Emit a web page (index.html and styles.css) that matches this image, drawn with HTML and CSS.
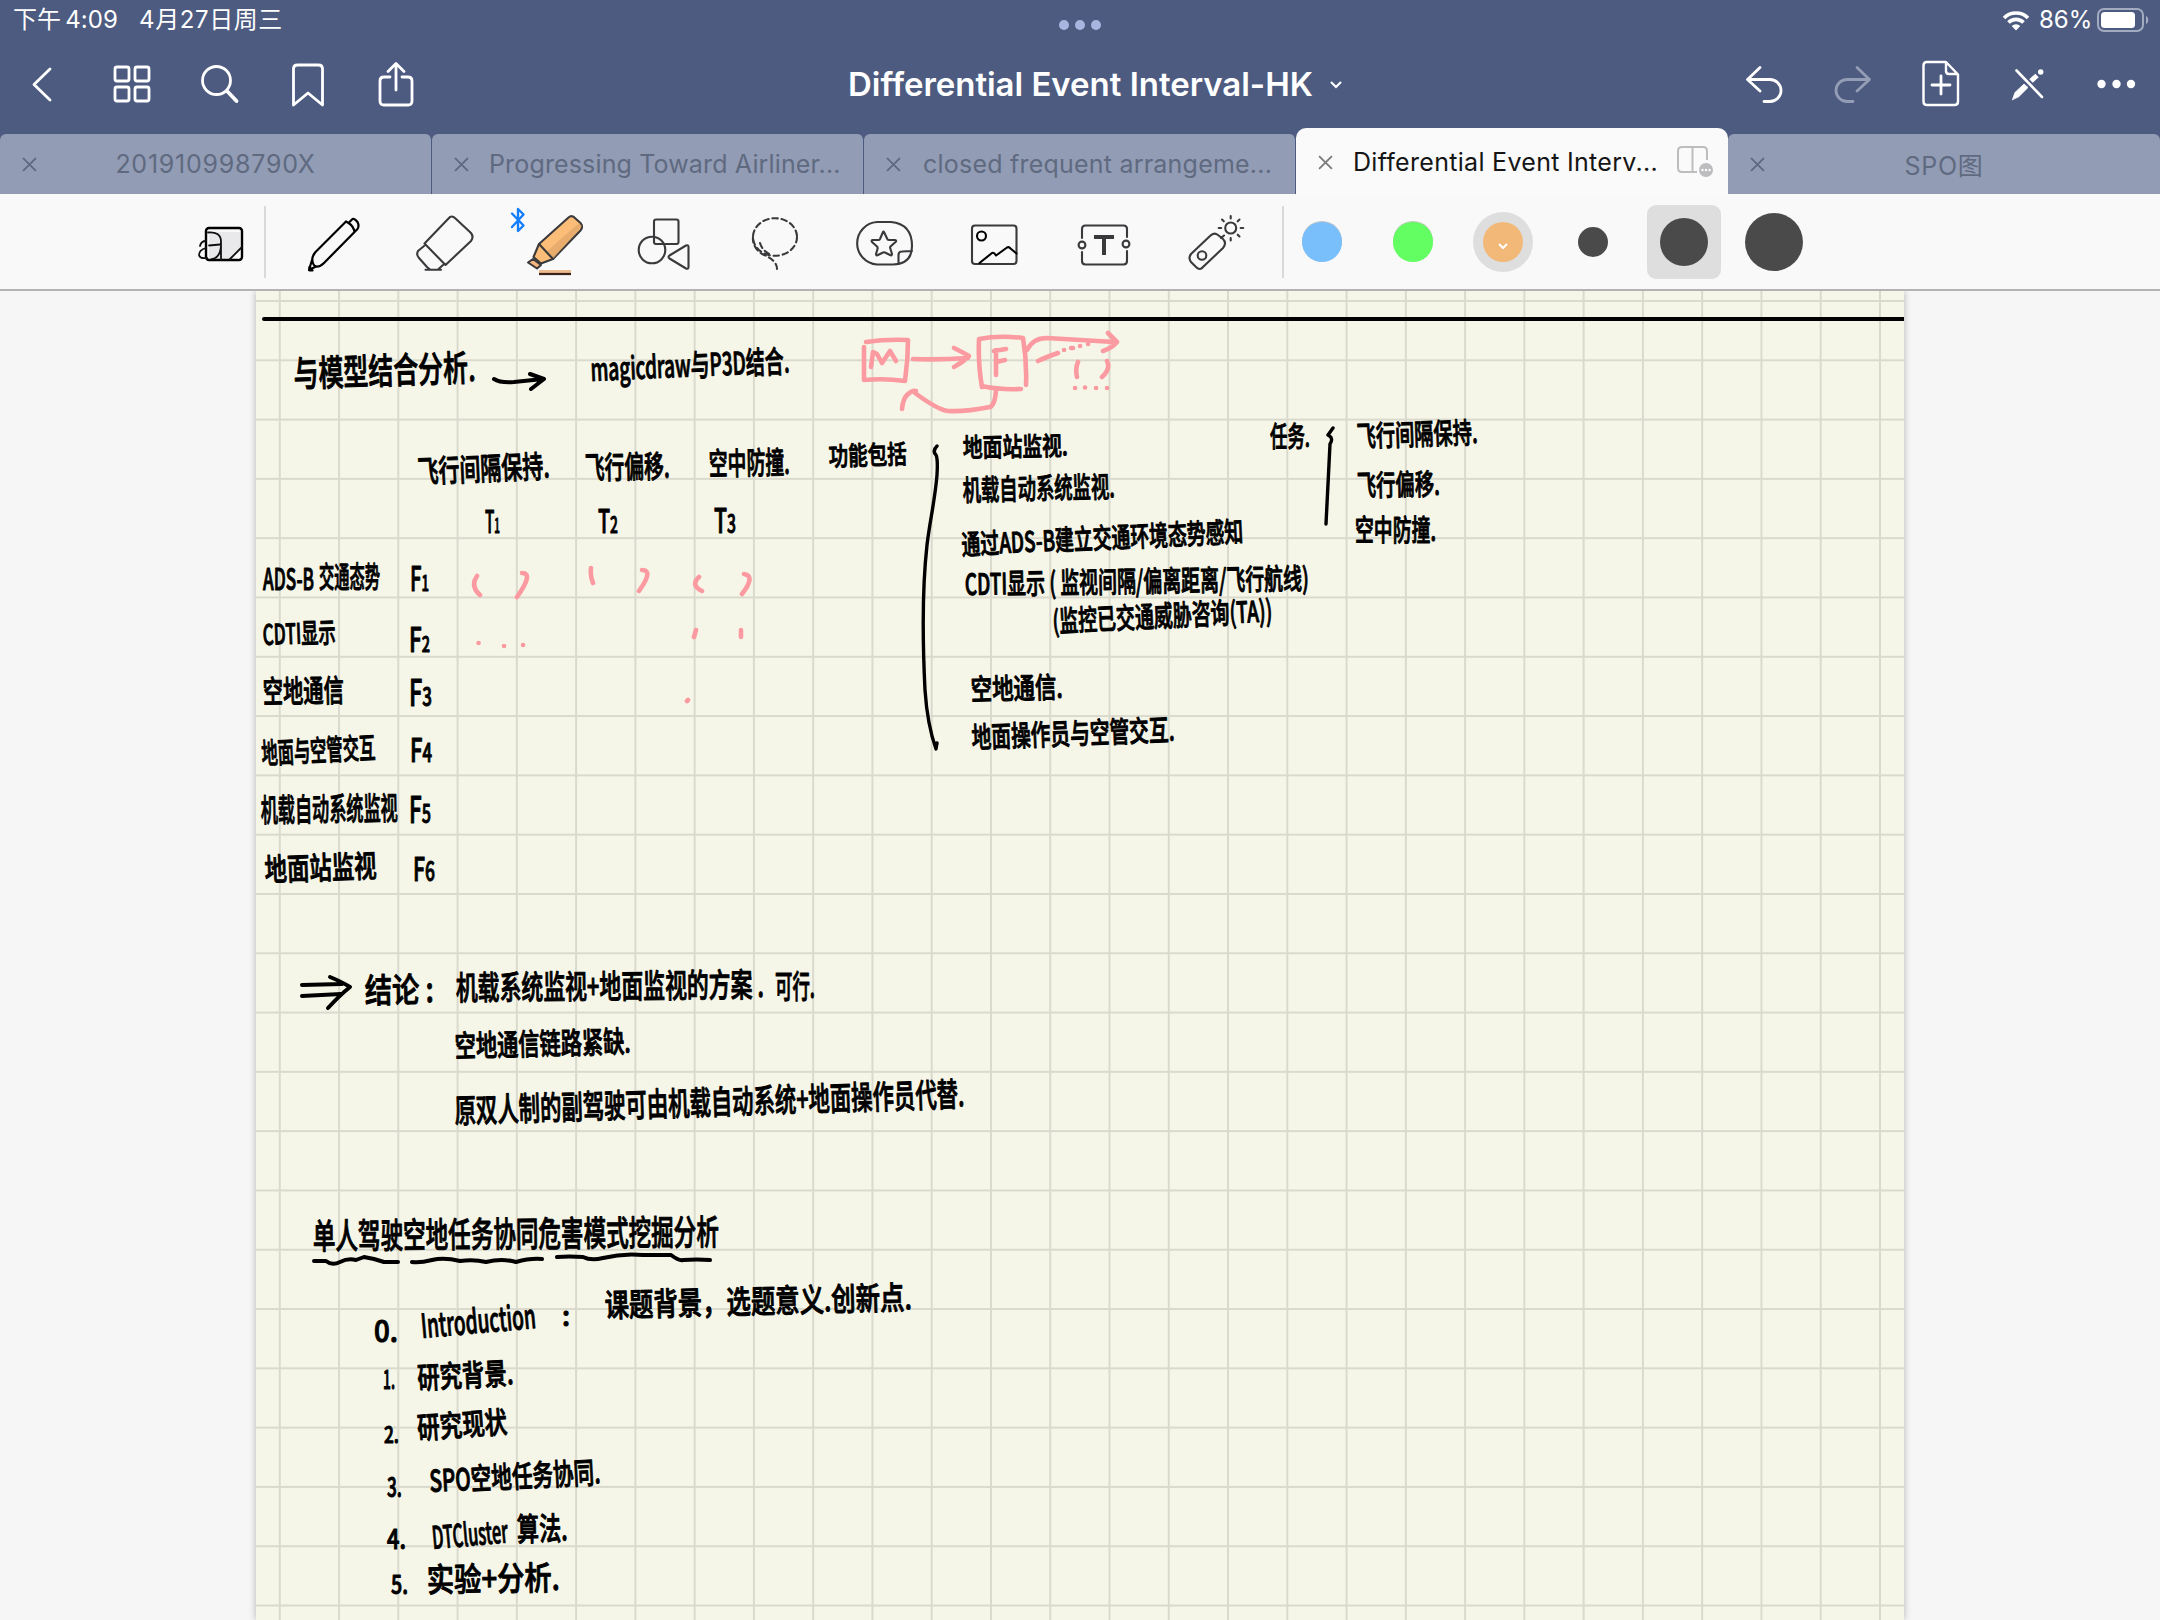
FILE: index.html
```html
<!DOCTYPE html>
<html lang="zh-CN">
<head>
<meta charset="utf-8">
<title>Differential Event Interval-HK</title>
<link rel="stylesheet" href="styles.css">
</head>
<body>
<header class="header">
  <div class="status">
    <div class="status-left"><span class="status-time">下午<b></b>4:09</span><span class="status-date">4月27日周三</span></div>
    <div class="status-dots"><i></i><i></i><i></i></div>
    <div class="status-right">
      <svg class="wifi" viewBox="0 0 28 21"><path d="M2 8a17 17 0 0 1 24 0M6.5 12.5a10.5 10.5 0 0 1 15 0" fill="none" stroke="#fff" stroke-width="3.6"/><path d="M14 20.5l-4.3-4.4a6 6 0 0 1 8.6 0z" fill="#fff"/></svg>
      <span class="status-battery">86%</span>
      <svg class="battery" viewBox="0 0 54 24"><rect x="1" y="1" width="45" height="22" rx="6" fill="none" stroke="#a3abc0" stroke-width="2"/><rect x="4" y="4" width="34" height="16" rx="3.5" fill="#fff"/><path d="M49 8c3 1 3 7 0 8z" fill="#a3abc0"/></svg>
    </div>
  </div>
  <nav class="nav">
    <div class="nav-group">
      <svg class="nav-icon" viewBox="0 44 88 80"><path d="M50 69L34 84.5L50 100"/></svg>
      <svg class="nav-icon" viewBox="88 44 88 80"><rect x="115" y="67" width="14" height="14" rx="2"/><rect x="135" y="67" width="14" height="14" rx="2"/><rect x="115" y="87" width="14" height="14" rx="2"/><rect x="135" y="87" width="14" height="14" rx="2"/></svg>
      <svg class="nav-icon" viewBox="176 44 88 80"><circle cx="216.500" cy="80.500" r="14"/><path d="M227 91L236.500 101" stroke-width="3.800"/></svg>
      <svg class="nav-icon" viewBox="264 44 88 80"><path d="M293.500 105V69q0-4 4-4h21q4 0 4 4v36L308 93z"/></svg>
      <svg class="nav-icon" viewBox="352 44 88 80"><path d="M390 77h-6q-4 0-4 4v20q0 4 4 4h24q4 0 4-4V81q0-4-4-4h-6M396 90V64M388 71.500L396 63.500L404 71.500"/></svg>
    </div>
    <div class="title"><h1>Differential Event Interval-HK</h1><svg class="title-chevron" viewBox="0 0 14 9"><path d="M2 2L7 7L12 2" fill="none" stroke="#fff" stroke-width="2.200"/></svg></div>
    <div class="nav-group">
      <svg class="nav-icon" viewBox="1720 44 88 80"><path d="M1760 67.500L1747.500 79.500L1760 91M1748 79.500H1770a11 11 0 0 1 0 22H1764"/></svg>
      <svg class="nav-icon nav-icon-off" viewBox="1808 44 88 80"><path d="M1857 67.500L1869.500 79.500L1857 91M1869 79.500H1847a11 11 0 0 0 0 22H1853"/></svg>
      <svg class="nav-icon" viewBox="1896 44 88 80"><path d="M1927 62h19l12 12.500v27q0 3.500-3.500 3.500h-27.500q-3.500 0-3.500-3.500V65.500q0-3.500 3.500-3.500zM1946 62.500V71q0 3 3 3h8.500" stroke-width="2.400"/><path d="M1941 76v18M1932 85h18"/></svg>
      <svg class="nav-icon" viewBox="1984 44 88 80"><path d="M2016.500 70.500L2042 97" stroke-width="2.600"/><path d="M2012.500 99.500L2015 92.500L2024 84L2028 87.500L2019 96.500z" fill="#fff" stroke-width="0.800"/><path d="M2031 81L2037 75.500" stroke-width="5" stroke-linecap="butt"/><circle cx="2040.700" cy="72" r="2" fill="#fff" stroke-width="1.500"/></svg>
      <svg class="nav-icon" viewBox="2072 44 88 80"><g fill="#fff" stroke="none"><circle cx="2101.500" cy="84" r="4.200"/><circle cx="2116.500" cy="84" r="4.200"/><circle cx="2131" cy="84" r="4.200"/></g></svg>
    </div>
  </nav>
  <div class="tabs">
    <div class="tab tab-centered"><svg class="close" viewBox="0 0 14 14"><path d="M1 1L13 13M13 1L1 13"/></svg><span class="tab-name">201910998790X</span></div>
    <div class="tab"><svg class="close" viewBox="0 0 14 14"><path d="M1 1L13 13M13 1L1 13"/></svg><span class="tab-name">Progressing Toward Airliner...</span></div>
    <div class="tab"><svg class="close" viewBox="0 0 14 14"><path d="M1 1L13 13M13 1L1 13"/></svg><span class="tab-name">closed frequent arrangeme...</span></div>
    <div class="tab tab-active"><svg class="close" viewBox="0 0 14 14"><path d="M1 1L13 13M13 1L1 13"/></svg><span class="tab-name">Differential Event Interv...</span>
      <svg class="split" viewBox="0 0 37 32"><path d="M20 26H5q-4 0-4-4V5q0-4 4-4h21q4 0 4 4v9M15.500 1v25" fill="none" stroke="#bdbdc0" stroke-width="2"/><circle cx="29" cy="24" r="7" fill="#bdbdc0"/><g fill="#fff"><circle cx="25.500" cy="24" r="1.200"/><circle cx="29" cy="24" r="1.200"/><circle cx="32.500" cy="24" r="1.200"/></g></svg></div>
    <div class="tab tab-centered"><svg class="close" viewBox="0 0 14 14"><path d="M1 1L13 13M13 1L1 13"/></svg><span class="tab-name">SPO图</span></div>
  </div>
</header>

<div class="toolbar">
  <svg class="tool tool-first" viewBox="166 194 98 96"><rect x="209" y="232" width="31" height="27" fill="#e9e9eb" stroke="none"/><path d="M230 260L242 247V260z" fill="#fff" stroke="none"/><rect x="206" y="228" width="36" height="32" rx="3" stroke="#000" stroke-width="2.400"/><g stroke="#111" stroke-width="1.800"><path d="M208 232.500q13-1 13 9V260M209 245.500L220 244.500M230 259L241.500 247.500M206 241q-5 0-6 5M206 248q-7 2-7 7q1 4 8 3M221 246q-1 12-9 13"/></g></svg>
  <i class="divider"></i>
  <svg class="tool tool-black" viewBox="278 194 110 96"><path d="M312.500 261q-1-4 3-9L346 221.500l2.500 1.500l4-4q2-1 5 3q2 4 0 7L324 263q-4 4-8 3.500q-3-1-3.500-5.500zM348.500 223q5 3 6 9M346 221.500L334 233.500M312 260L309 270L316 266.500"/><path d="M309.500 267v3.500h3z" fill="#000"/></svg>
  <svg class="tool" viewBox="388 194 110 96"><path d="M448.500 218.500q3-4 7 0L471 233q3 4 0 8L445.500 265L424.500 243.500zM424 246l-6 5q-2 4 1 7l8 9l3 2.500M443 265l-5 4.500M425.500 269.700H441"/></svg>
  <svg class="tool" viewBox="498 194 110 96"><path d="M512 213.500L523.500 225.500L518 231V209L523.500 214.500L512 227" stroke="#147efb" stroke-width="2.400"/><path d="M539 244L568.500 217.500q3.500-3 7 1l5 4.500q3 4 0 7.500L553 259L541 263.500L533.500 257z" fill="#fbbd78"/><path d="M546 252l33-29l3 3L553 259z" fill="#dda466" stroke="none" opacity=".65"/><path d="M539 244L553 259"/><path d="M533 259L528 262.500L537 268.500L541 265z" fill="#f7b57f"/><path d="M539 271.500H571" stroke="#efbb91" stroke-width="3" stroke-linecap="butt"/><path d="M539 274H571" stroke="#3b2418" stroke-width="2.200" stroke-linecap="butt"/></svg>
  <svg class="tool" viewBox="608 194 110 96"><rect x="654" y="219.500" width="24.500" height="24.500" rx="2"/><circle cx="652" cy="250" r="13.300"/><path d="M669.500 255.500L686 245.500q2.500-1 2.500 1.500V267q0 2.500-2.500 1.500L669.500 258.500q-2-1.500 0-3z"/></svg>
  <svg class="tool" viewBox="718 194 110 96"><ellipse cx="775" cy="237" rx="22" ry="18.800" stroke-dasharray="5.500 3.800"/><path d="M753 237q-1 10 9 17q15 6 15 15M760 243q2 7 9 11" stroke-dasharray="5.500 3.800"/></svg>
  <svg class="tool" viewBox="828 194 110 96"><path d="M877 222h14q21 2 21 24q0 18-19 18.500h-16a21.300 21.300 0 0 1 0-42.500zM898.500 264V255q0-3.500 3.500-3.500l10-.5"/><path d="M884 232l3.300 7q.5 1 2 1h5.700q2 .5.500 2l-5 4.500q-.8 1 0 2.500l1.500 5q0 2-2 1l-5-2.500q-1-.6-2 0l-5 2.500q-2 1-2-1l1.500-5q.5-1.500-.5-2.500l-5-4.500q-1-1.500.5-2h6q1 0 1.500-1l3-7q.5-1 1 0z"/></svg>
  <svg class="tool" viewBox="938 194 110 96"><rect x="972" y="225.500" width="44.500" height="38.500" rx="3"/><g stroke="#000"><circle cx="981.500" cy="236" r="4.500"/><path d="M979.500 263L992 253q2-1 4 2.500l11-8q2-1 3.500 1l6 5"/></g></svg>
  <svg class="tool" viewBox="1048 194 110 96"><path d="M1082 238V229q0-3.500 3.500-3.500h38q3.500 0 3.500 3.500v8M1082 252v9q0 3.500 3.500 3.500h38q3.500 0 3.500-3.500V251"/><circle cx="1082" cy="245" r="3.400"/><circle cx="1126" cy="244" r="3.400"/><path d="M1094 237H1114M1104 237V255" stroke-width="4" stroke-linecap="butt"/></svg>
  <svg class="tool" viewBox="1158 194 110 96"><path d="M1210 236q4-4 8-1l5 4q4 4 0 9L1203 267q-3 4-7 0l-5-5q-3-4 0-8zM1221 238l3-2.500"/><circle cx="1202" cy="255.500" r="4.300"/><circle cx="1230.700" cy="228" r="5.500"/><path d="M1230.700 216v2.500M1230.700 238v2.500M1218.700 228h2.500M1240.700 228h2.500M1222 219.500l1.800 1.800M1239.500 219.500l-1.800 1.800M1239.500 236.500l-1.800-1.800"/></svg>
  <i class="divider divider-end"></i>
  <div class="swatches">
    <div class="swatch"><i class="dot blue"></i></div>
    <div class="swatch"><i class="dot green"></i></div>
    <div class="swatch"><i class="ring"><svg class="dot orange" viewBox="0 0 40 40"><path d="M16 22L20 26L24 22" fill="none" stroke="#fff" stroke-width="2"/></svg></i></div>
    <div class="swatch"><i class="dot small"></i></div>
    <div class="swatch"><i class="picked"><i class="dot medium"></i></i></div>
    <div class="swatch"><i class="dot large"></i></div>
  </div>
</div>

<main class="workspace">
<article class="page">
<svg class="ink" viewBox="256 291 1648 1329">
  <path class="rule" d="M264 319H1904"/>

  <!-- heading line -->
  <text transform="translate(294 387) rotate(-2)" font-size="36" textLength="182" lengthAdjust="spacingAndGlyphs">与模型结合分析.</text>
  <text transform="translate(591 381) rotate(-2.500)" font-size="31" textLength="199" lengthAdjust="spacingAndGlyphs">magicdraw与P3D结合.</text>
  <path class="pen" d="M494 379q6 4 20 3l29-3M530 374L544 379L531 389"/>

  <!-- task columns -->
  <text transform="translate(418 483) rotate(-2.500)" font-size="31" textLength="132" lengthAdjust="spacingAndGlyphs">飞行间隔保持.</text>
  <text transform="translate(585 479) rotate(-1)" font-size="31" textLength="85" lengthAdjust="spacingAndGlyphs">飞行偏移.</text>
  <text transform="translate(709 475) rotate(-1)" font-size="31" textLength="81" lengthAdjust="spacingAndGlyphs">空中防撞.</text>
  <text transform="translate(829 466) rotate(-2)" font-size="26" textLength="78" lengthAdjust="spacingAndGlyphs">功能包括</text>
  <text x="485" y="533" font-size="31" textLength="15" lengthAdjust="spacingAndGlyphs">T<tspan font-size="20">1</tspan></text>
  <text x="598" y="533" font-size="33" textLength="20" lengthAdjust="spacingAndGlyphs">T<tspan font-size="23">2</tspan></text>
  <text x="714" y="533" font-size="34" textLength="22" lengthAdjust="spacingAndGlyphs">T<tspan font-size="25">3</tspan></text>

  <!-- function rows -->
  <text x="263" y="590" font-size="29" textLength="51" lengthAdjust="spacingAndGlyphs">ADS-B</text>
  <text x="319" y="588" font-size="29" textLength="61" lengthAdjust="spacingAndGlyphs">交通态势</text>
  <text x="410" y="591" font-size="34" textLength="19" lengthAdjust="spacingAndGlyphs">F<tspan font-size="22">1</tspan></text>
  <text transform="translate(263 645) rotate(-2)" font-size="28" textLength="73" lengthAdjust="spacingAndGlyphs">CDTI显示</text>
  <text x="409" y="652" font-size="34" textLength="21" lengthAdjust="spacingAndGlyphs">F<tspan font-size="22">2</tspan></text>
  <text transform="translate(263 703) rotate(-1)" font-size="31" textLength="81" lengthAdjust="spacingAndGlyphs">空地通信</text>
  <text x="409" y="706" font-size="36" textLength="23" lengthAdjust="spacingAndGlyphs">F<tspan font-size="26">3</tspan></text>
  <text transform="translate(262 764) rotate(-3)" font-size="29" textLength="114" lengthAdjust="spacingAndGlyphs">地面与空管交互</text>
  <text x="410" y="762" font-size="33" textLength="22" lengthAdjust="spacingAndGlyphs">F<tspan font-size="25">4</tspan></text>
  <text transform="translate(261 822) rotate(-1)" font-size="32" textLength="137" lengthAdjust="spacingAndGlyphs">机载自动系统监视</text>
  <text x="409" y="823" font-size="36" textLength="22" lengthAdjust="spacingAndGlyphs">F<tspan font-size="26">5</tspan></text>
  <text transform="translate(265 881) rotate(-2)" font-size="31" textLength="112" lengthAdjust="spacingAndGlyphs">地面站监视</text>
  <text x="413" y="881" font-size="33" textLength="22" lengthAdjust="spacingAndGlyphs">F<tspan font-size="27">6</tspan></text>

  <!-- function list -->
  <path class="pen thin" d="M937 446q-5 5-1 9q2 4 1 20C935 500 930 520 927 545C922 590 923 650 925 690C927 720 931 735 936 749L937 743"/>
  <text transform="translate(963 457) rotate(-1)" font-size="26" textLength="105" lengthAdjust="spacingAndGlyphs">地面站监视.</text>
  <text transform="translate(963 501) rotate(-1.500)" font-size="29" textLength="152" lengthAdjust="spacingAndGlyphs">机载自动系统监视.</text>
  <text transform="translate(962 555) rotate(-2.700)" font-size="28" textLength="282" lengthAdjust="spacingAndGlyphs">通过ADS-B建立交通环境态势感知</text>
  <text transform="translate(965 595) rotate(-1)" font-size="29" textLength="344" lengthAdjust="spacingAndGlyphs">CDTI显示 ( 监视间隔/偏离距离/飞行航线)</text>
  <text transform="translate(1053 632) rotate(-2.800)" font-size="29" textLength="220" lengthAdjust="spacingAndGlyphs">(监控已交通威胁咨询(TA))</text>
  <text transform="translate(971 700) rotate(-1.500)" font-size="29" textLength="92" lengthAdjust="spacingAndGlyphs">空地通信.</text>
  <text transform="translate(972 748) rotate(-2.200)" font-size="29" textLength="203" lengthAdjust="spacingAndGlyphs">地面操作员与空管交互.</text>

  <!-- task list -->
  <text transform="translate(1270 447)" font-size="28" textLength="40" lengthAdjust="spacingAndGlyphs">任务.</text>
  <path class="pen thin" d="M1333 428l-5 7q6 3 2 9q-2 40-4 80"/>
  <text transform="translate(1357 447) rotate(-2)" font-size="29" textLength="121" lengthAdjust="spacingAndGlyphs">飞行间隔保持.</text>
  <text transform="translate(1357 496) rotate(-1)" font-size="29" textLength="83" lengthAdjust="spacingAndGlyphs">飞行偏移.</text>
  <text transform="translate(1355 541)" font-size="29" textLength="81" lengthAdjust="spacingAndGlyphs">空中防撞.</text>

  <!-- conclusion -->
  <path class="pen" d="M302 985L342 984M302 996L341 994M330 977Q342 982 350 987Q340 995 328 1008"/>
  <text transform="translate(365 1003) rotate(-1)" font-size="34" textLength="69" lengthAdjust="spacingAndGlyphs">结论 :</text>
  <text transform="translate(456 1000) rotate(-.6)" font-size="33" textLength="308" lengthAdjust="spacingAndGlyphs">机载系统监视+地面监视的方案 .</text>
  <text x="775" y="998" font-size="32" textLength="40" lengthAdjust="spacingAndGlyphs">可行.</text>
  <text transform="translate(455 1057) rotate(-1.500)" font-size="30" textLength="176" lengthAdjust="spacingAndGlyphs">空地通信链路紧缺.</text>
  <text transform="translate(455 1123) rotate(-1.900)" font-size="33" textLength="510" lengthAdjust="spacingAndGlyphs">原双人制的副驾驶可由机载自动系统+地面操作员代替.</text>

  <!-- outline -->
  <text transform="translate(313 1249) rotate(-.6)" font-size="35" textLength="406" lengthAdjust="spacingAndGlyphs">单人驾驶空地任务协同危害模式挖掘分析</text>
  <path class="pen" d="M314 1261h12q6 5 14 1t16-2l8-3l10 2l10 3l14 0M412 1262q8 1 20-2t28 1q14-2 26 1q16-4 30 0q14-4 26-3M557 1257q12-1 26 0q8 4 20 1q20-5 40-3h28q8 6 12 5q14-1 27 0"/>
  <text x="374" y="1342" font-size="29" textLength="24" lengthAdjust="spacingAndGlyphs">0.</text>
  <text transform="translate(422 1338) rotate(-5)" font-size="33" textLength="115" lengthAdjust="spacingAndGlyphs">Introduction</text>
  <text x="562" y="1326" font-size="27">:</text>
  <text transform="translate(605 1317) rotate(-1.500)" font-size="32" textLength="307" lengthAdjust="spacingAndGlyphs">课题背景，选题意义.创新点.</text>
  <text x="383" y="1389" font-size="26" textLength="12" lengthAdjust="spacingAndGlyphs">1.</text>
  <text transform="translate(418 1389) rotate(-3)" font-size="30" textLength="96" lengthAdjust="spacingAndGlyphs">研究背景.</text>
  <text x="384" y="1443" font-size="23" textLength="15" lengthAdjust="spacingAndGlyphs">2.</text>
  <text transform="translate(418 1439) rotate(-4)" font-size="30" textLength="90" lengthAdjust="spacingAndGlyphs">研究现状</text>
  <text x="387" y="1497" font-size="27" textLength="15" lengthAdjust="spacingAndGlyphs">3.</text>
  <text transform="translate(430 1492) rotate(-3)" font-size="30" textLength="171" lengthAdjust="spacingAndGlyphs">SPO空地任务协同.</text>
  <text x="387" y="1549" font-size="27" textLength="19" lengthAdjust="spacingAndGlyphs">4.</text>
  <text transform="translate(433 1549) rotate(-5)" font-size="31" textLength="76" lengthAdjust="spacingAndGlyphs">DTCluster</text>
  <text transform="translate(517 1541) rotate(-1)" font-size="32" textLength="51" lengthAdjust="spacingAndGlyphs">算法.</text>
  <text x="391" y="1594" font-size="26" textLength="17" lengthAdjust="spacingAndGlyphs">5.</text>
  <text transform="translate(427 1592) rotate(-1)" font-size="33" textLength="133" lengthAdjust="spacingAndGlyphs">实验+分析.</text>

  <!-- pink diagram and marks -->
  <g class="pink">
    <path d="M866 342q20-3 42-2q0 20-3 41q-20-3-41-1V347M913 359q25 1 55-1M954 348q10 5 15 8q-7 7-15 11"/>
    <path d="M871 367L873 352L877 354L882 363L890 351L896 361" stroke-width="3.600"/>
    <path d="M982 387q-4-22-3-48q20-4 44-1q4 24 3 47M982 386q18 4 39 3M996 350V375M994 351L1006 349M996 362L1005 360M1027 350q6-12 20-12l67 4M1108 333l9 9q-5 6-14 9M1038 361q8-4 20-8M1064 350h.1M1071 348h2M1080 346h.1M1088 344h.1M1078 362q-3 6-1 15M1107 361q4 8-5 16M1075 388h.1M1085 387.500h.1M1096 388h.1M1107 388h.1"/>
    <path d="M996 390q-1 15-6 17q-25 5-42 4q-10-1-33-18M902 409q1-10 5-14q5-5 9-4"/>
    <path d="M477 576q-7 10 3 19M522 573q12 0-5 24M591 568q-1 8 2 15M642 570q12 0-3 21M699 577q-9 8 3 14M744 574q12 2-2 20M478.500 643h.1M504 646h.1M523 645h.1M696 630l-2 7M741 630v7M687 701l1-1"/>
  </g>
</svg>
</article>
</main>
</body>
</html>
```
FILE: styles.css
```css
* { box-sizing: border-box; }
html, body { margin: 0; height: 100%; }
body {
  width: 2160px;
  height: 1620px;
  overflow: hidden;
  display: flex;
  flex-direction: column;
  background: #f6f6f7;
  font-family: Inter, "Noto Sans CJK SC", sans-serif;
}
i { display: block; font-style: normal; }
svg { display: block; flex: none; }

.header { height: 194px; flex: none; background: #4d5b80; color: #fff; display: flex; flex-direction: column; }
.status { height: 44px; display: grid; grid-template-columns: 1fr auto 1fr; }
.status-left { padding: 5px 0 0 13px; display: flex; gap: 21px; font-size: 24px; line-height: 30px; }
.status-left b { display: inline-block; width: 4px; }
.status-time { letter-spacing: 0.1px; }
.status-date { letter-spacing: 0.6px; }
.status-dots { display: flex; gap: 6px; padding-top: 20px; }
.status-dots i { width: 10px; height: 10px; border-radius: 50%; background: #a9b5de; }
.status-right { display: flex; justify-content: flex-end; padding: 8px 9px 0 0; height: 32px; align-items: center; }
.wifi { width: 28px; height: 21px; margin-right: 9px; }
.status-battery { width: 58px; font-size: 24px; letter-spacing: 0; line-height: 24px; }
.battery { width: 54px; height: 24px; }

.nav { height: 80px; display: flex; justify-content: space-between; align-items: center; }
.nav-group { display: flex; width: 440px; }
.nav-icon { width: 88px; height: 80px; fill: none; stroke: #fff; stroke-width: 2.8; stroke-linecap: round; stroke-linejoin: round; }
.nav-icon-off { stroke: #949db6; }
.title { display: flex; align-items: center; gap: 16px; padding-left: 31px; }
.title h1 { margin: 0; font-size: 33px; font-weight: 600; line-height: 40px; letter-spacing: -0.03px; white-space: nowrap; }
.title-chevron { width: 14px; height: 9px; }

.tabs { flex: 1; display: grid; grid-template-columns: repeat(5, 432px); align-items: end; padding-top: 4px; }
.tab {
  height: 60px;
  display: flex;
  align-items: center;
  padding: 0 22px;
  background: #929cb5;
  color: #5f6a80;
  border-radius: 6px 6px 0 0;
  border-right: 1px solid #4d5b80;
  font-size: 25px;
}
.tab:last-child { border-right: 0; }
.tab-name { flex: 1; white-space: nowrap; padding-left: 20px; letter-spacing: 0.15px; }
.tab:nth-child(3) .tab-name { padding-left: 22px; letter-spacing: 0.22px; }
.tab-centered .tab-name { text-align: center; padding: 0 15px 0 0; letter-spacing: 0.75px; }
.close { width: 15px; height: 15px; fill: none; stroke: currentColor; stroke-width: 1.7; }
.tab-active { height: 66px; background: #fafafa; color: #151515; border-radius: 10px 10px 0 0; border-right: 0; padding: 2px 14px 0 22px; }
.tab-active .tab-name { letter-spacing: 0.3px; }
.tab-active .close { stroke: #7a7a7c; }
.split { width: 37px; height: 32px; }

.toolbar { height: 97px; flex: none; display: flex; align-items: center; padding-left: 166px; background: #f9f9fa; border-bottom: 2px solid #b3b3b5; }
.tool { width: 110px; height: 96px; fill: none; stroke: #3a3a3c; stroke-width: 2.1; stroke-linecap: round; stroke-linejoin: round; }
.tool-first { width: 98px; }
.tool-black { stroke: #000; stroke-width: 2.2; }
.divider { width: 2px; height: 72px; margin-right: 12px; background: #d9d9dc; }
.divider-end { margin: 0 -7px 0 14px; }
.swatches { display: grid; grid-template-columns: repeat(6, 90.4px); }
.swatch { display: grid; place-items: center; height: 74px; }
.dot { width: 40px; height: 40px; border-radius: 50%; background: #4a4a4a; }
.blue { background: #79bffc; box-shadow: 0 -1px 0 #b9c3ca; }
.green { background: #63ff62; box-shadow: 0 -1px 0 #b5cdb5; }
.ring { width: 60px; height: 60px; border-radius: 50%; background: #dededf; display: grid; place-items: center; }
.orange { background: #f2b878; }
.small { width: 30px; height: 30px; }
.medium { width: 48px; height: 48px; }
.large { width: 58px; height: 58px; }
.picked { width: 74px; height: 74px; border-radius: 9px; background: #dededf; display: grid; place-items: center; }

.workspace { flex: 1; display: flex; justify-content: center; background: #f6f6f7; overflow: hidden; }
.page {
  width: 1648px;
  background-color: #f6f6e8;
  background-image:
    linear-gradient(to right, #d9dacd 2px, transparent 2px),
    linear-gradient(to bottom, #d9dacd 2px, transparent 2px);
  background-size: 59.27px 59.3px;
  background-position: 22.8px 9px;
  box-shadow: 0 0 7px rgba(0, 0, 0, 0.28);
}
.ink { width: 1648px; height: 1329px; fill: none; stroke-linecap: round; stroke-linejoin: round; }
.ink text { font-family: "Noto Sans CJK SC", sans-serif; font-weight: 500; fill: #000; stroke: #000; stroke-width: 1px; }
.rule { stroke: #000; stroke-width: 4; }
.pen { stroke: #000; stroke-width: 4; }
.thin { stroke-width: 3.4; }
.pink path { stroke: #fb9aa0; stroke-width: 4.6; }
```
